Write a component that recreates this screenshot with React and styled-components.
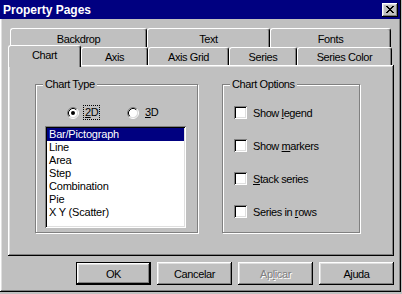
import styled, { createGlobalStyle, css } from "styled-components";

const GlobalStyle = createGlobalStyle`
  html, body {
    margin: 0;
    padding: 0;
    background: #c0c0c0;
  }
  body {
    font-family: "Liberation Sans", Arial, sans-serif;
    font-size: 11px;
    letter-spacing: -0.4px;
    color: #000;
  }
`;

const raised = css`
  box-shadow: inset -1px -1px 0 #000, inset 1px 1px 0 #fff,
    inset -2px -2px 0 #808080, inset 2px 2px 0 #dfdfdf;
`;

const sunken = css`
  box-shadow: inset 1px 1px 0 #808080, inset -1px -1px 0 #fff,
    inset 2px 2px 0 #000, inset -2px -2px 0 #dfdfdf;
`;

const Window = styled.div`
  width: 401px;
  height: 292px;
  box-sizing: border-box;
  padding: 3px;
  background: #c0c0c0;
  ${raised}
`;

const TitleBar = styled.div`
  height: 19px;
  margin: -3px -2px 0 -3px;
  padding: 0 2px 0 3px;
  background: #000080;
  display: flex;
  align-items: center;
  justify-content: space-between;
`;

const Title = styled.span`
  color: #fff;
  font-weight: bold;
  font-size: 12px;
  letter-spacing: 0;
`;

const CloseButton = styled.div`
  width: 16px;
  height: 14px;
  background: #c0c0c0;
  display: flex;
  align-items: center;
  justify-content: center;
  padding-bottom: 1px;
  box-sizing: border-box;
  ${raised}
`;

const Body = styled.div`
  padding: 9px 4px 0 5px;
`;

const TabStrip = styled.div`
  width: 386px;
  display: flex;
  flex-direction: column;
`;

const TabRow = styled.div`
  display: flex;
  align-items: flex-end;
  height: ${(p) => (p.$back ? 19 : 18)}px;
  padding-left: ${(p) => (p.$back ? 2 : 0)}px;
`;

const Tab = styled.div`
  position: relative;
  width: ${(p) => p.$w}px;
  height: ${(p) => (p.$active ? 22 : p.$back ? 19 : 18)}px;
  margin-bottom: ${(p) => (p.$active ? -2 : 0)}px;
  z-index: ${(p) => (p.$active ? 2 : 1)};
  box-sizing: border-box;
  background: #c0c0c0;
  border-left: 1px solid #fff;
  border-top: 1px solid #fff;
  border-right: 1px solid #000;
  border-radius: 3px 3px 0 0;
  box-shadow: inset -1px 0 0 #808080;
  display: flex;
  align-items: center;
  justify-content: center;
  padding-bottom: ${(p) => (p.$active ? 3 : 0)}px;
  padding-top: ${(p) => (p.$back ? 2 : 0)}px;
`;

const Panel = styled.div`
  width: 386px;
  height: 191px;
  box-sizing: border-box;
  padding: 19px 0 0 27px;
  display: flex;
  align-items: flex-start;
  gap: 24px;
  ${raised}
`;

const Group = styled.div`
  position: relative;
  width: ${(p) => p.$w}px;
  height: 149px;
  box-sizing: border-box;
  border: 1px solid #808080;
  box-shadow: 1px 1px 0 #fff, inset 1px 1px 0 #fff;
  padding: ${(p) => p.$pad};
`;

const Caption = styled.span`
  position: absolute;
  top: -7px;
  left: 7px;
  padding: 0 2px;
  line-height: 13px;
  background: #c0c0c0;
`;

const RadioRow = styled.div`
  display: flex;
  align-items: center;
  height: 15px;
  padding-left: 31px;
`;

const RadioOption = styled.div`
  width: 60px;
  display: flex;
  align-items: center;
  gap: 4px;
`;

const OptionLabel = styled.span`
  line-height: 13px;
  padding: 0 1px;
  border: 1px dotted ${(p) => (p.$focus ? "#000" : "transparent")};
`;

const ListBox = styled.div`
  width: 141px;
  height: 102px;
  margin: 6px 0 0 9px;
  box-sizing: border-box;
  padding: 2px;
  background: #fff;
  letter-spacing: -0.2px;
  ${sunken}
`;

const ListItem = styled.div`
  height: 13px;
  line-height: 13px;
  padding-left: 2px;
  background: ${(p) => (p.$selected ? "#000080" : "transparent")};
  color: ${(p) => (p.$selected ? "#fff" : "#000")};
`;

const CheckList = styled.div`
  display: flex;
  flex-direction: column;
  gap: 20px;
`;

const CheckRow = styled.div`
  display: flex;
  align-items: center;
  gap: 6px;
  height: 13px;
`;

const CheckBox = styled.span`
  width: 13px;
  height: 13px;
  background: #fff;
  ${sunken}
`;

const ButtonRow = styled.div`
  display: flex;
  justify-content: flex-end;
  gap: 6px;
  margin-top: 6px;
`;

const Button = styled.div`
  width: 75px;
  height: 23px;
  box-sizing: border-box;
  display: flex;
  align-items: center;
  justify-content: center;
  background: #c0c0c0;
  ${raised}
  ${(p) =>
    p.$default &&
    css`
      border: 1px solid #000;
    `}
  ${(p) =>
    p.$disabled &&
    css`
      color: #808080;
      text-shadow: 1px 1px 0 #fff;
    `}
`;

const CloseGlyph = () => (
  <svg width="8" height="7" viewBox="0 0 8 7" shapeRendering="crispEdges">
    <path
      fill="#000"
      d="M0 0h2v1H0zM6 0h2v1H6zM1 1h2v1H1zM5 1h2v1H5zM2 2h4v1H2zM3 3h2v1H3zM2 4h4v1H2zM1 5h2v1H1zM5 5h2v1H5zM0 6h2v1H0zM6 6h2v1H6z"
    />
  </svg>
);

const RadioMark = ({ checked }) => (
  <svg width="12" height="12" viewBox="0 0 12 12">
    <circle cx="6" cy="6" r="4.5" fill="#fff" />
    <path d="M2.11 9.89A5.5 5.5 0 0 1 9.89 2.11" fill="none" stroke="#808080" />
    <path d="M9.89 2.11A5.5 5.5 0 0 1 2.11 9.89" fill="none" stroke="#fff" />
    <path d="M2.82 9.18A4.5 4.5 0 0 1 9.18 2.82" fill="none" stroke="#000" />
    <path d="M9.18 2.82A4.5 4.5 0 0 1 2.82 9.18" fill="none" stroke="#dfdfdf" />
    {checked && <circle cx="6" cy="6" r="2" fill="#000" />}
  </svg>
);

const backTabs = [
  ["Backdrop", 137],
  ["Text", 123],
  ["Fonts", 121],
];

const frontTabs = [
  ["Chart", 73, true],
  ["Axis", 67],
  ["Axis Grid", 81],
  ["Series", 68],
  ["Series Color", 95],
];

const chartTypes = ["Bar/Pictograph", "Line", "Area", "Step", "Combination", "Pie", "X Y (Scatter)"];

const App = () => {
  return (
    <>
      <GlobalStyle />
      <Window>
        <TitleBar>
          <Title>Property Pages</Title>
          <CloseButton>
            <CloseGlyph />
          </CloseButton>
        </TitleBar>
        <Body>
          <TabStrip>
            <TabRow $back>
              {backTabs.map(([name, w]) => (
                <Tab key={name} $w={w} $back>
                  {name}
                </Tab>
              ))}
            </TabRow>
            <TabRow>
              {frontTabs.map(([name, w, active]) => (
                <Tab key={name} $w={w} $active={active}>
                  {name}
                </Tab>
              ))}
            </TabRow>
          </TabStrip>
          <Panel>
            <Group $w={163} $pad="20px 0 0 0">
              <Caption>Chart Type</Caption>
              <RadioRow>
                <RadioOption>
                  <RadioMark checked />
                  <OptionLabel $focus>
                    <u>2</u>D
                  </OptionLabel>
                </RadioOption>
                <RadioOption>
                  <RadioMark />
                  <OptionLabel>
                    <u>3</u>D
                  </OptionLabel>
                </RadioOption>
              </RadioRow>
              <ListBox>
                {chartTypes.map((t, i) => (
                  <ListItem key={t} $selected={i === 0}>
                    {t}
                  </ListItem>
                ))}
              </ListBox>
            </Group>
            <Group $w={138} $pad="21px 0 0 11px">
              <Caption>Chart Options</Caption>
              <CheckList>
                <CheckRow>
                  <CheckBox />
                  <span>
                    Show <u>l</u>egend
                  </span>
                </CheckRow>
                <CheckRow>
                  <CheckBox />
                  <span>
                    Show <u>m</u>arkers
                  </span>
                </CheckRow>
                <CheckRow>
                  <CheckBox />
                  <span>
                    <u>S</u>tack series
                  </span>
                </CheckRow>
                <CheckRow>
                  <CheckBox />
                  <span>
                    Series in <u>r</u>ows
                  </span>
                </CheckRow>
              </CheckList>
            </Group>
          </Panel>
          <ButtonRow>
            <Button $default>OK</Button>
            <Button>Cancelar</Button>
            <Button $disabled>
              Ap<u>l</u>icar
            </Button>
            <Button>Ajuda</Button>
          </ButtonRow>
        </Body>
      </Window>
    </>
  );
};

export default App;
